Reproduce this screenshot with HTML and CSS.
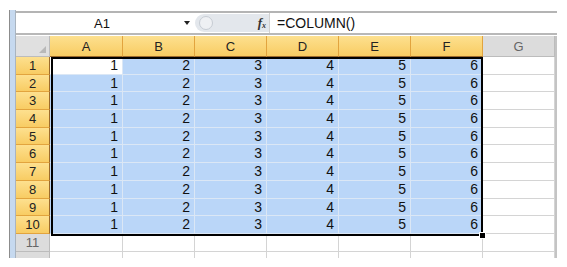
FILE: index.html
```html
<!DOCTYPE html>
<html>
<head>
<meta charset="utf-8">
<link rel="stylesheet" href="styles.css">
</head>
<body>
<div class="window">
  <div class="band"></div>
  <div class="main">
    <div class="fbar">
      <div class="namebox"><span class="name">A1</span><span class="drop"></span></div>
      <div class="pill"><span class="circle"></span><span class="fx">f<sub>x</sub></span></div>
      <div class="formula">=COLUMN()</div>
    </div>
    <div class="sheet">
      <div class="grid" id="grid"></div>
      <div class="selection"><span class="handle"></span></div>
    </div>
  </div>
</div>
<script src="app.js"></script>
</body>
</html>
```
FILE: app.js
```js
var g = document.getElementById('grid');
var cols = ['A','B','C','D','E','F','G'];
function el(cls, txt){ var d=document.createElement('div'); d.className=cls; if(txt!==undefined) d.textContent=txt; g.appendChild(d); }
el('hd corner');
cols.forEach(function(c,i){ el('hd col' + (i<6?' sel':''), c); });
el('edge');
for (var r=1; r<=12; r++){
  el('hd row' + (r<=10?' sel':''), r<=11 ? String(r) : '');
  for (var c=0; c<7; c++){
    var inSel = r<=10 && c<6;
    var cls = 'cell' + (inSel ? (r===1&&c===0 ? ' active' : ' in') : '');
    el(cls, inSel ? String(c+1) : '');
  }
  el('edge');
}
```
FILE: styles.css
```css
html, body { margin: 0; padding: 0; background: #fff; }
body { font-family: "Liberation Sans", Arial, sans-serif; color: #111; }
.window { display: flex; margin: 10px 0 0 9px; width: 548px; height: 248px; overflow: hidden; }
.band { width: 5px; flex: none; background: #c6d9ef; border-left: 1px solid #8c8c8c; border-right: 1px solid #a9b4c0; }
.main { flex: 1; display: flex; flex-direction: column; overflow: hidden; }
.fbar { display: flex; height: 20px; border-top: 2px solid #b4b4b4; border-bottom: 2px solid #b8b8b8; margin-top: 1px; background: #fff; align-items: stretch; }
.namebox { width: 179px; display: flex; align-items: center; position: relative; }
.name { flex: 1; text-align: center; font-size: 13px; padding-left: 4px; }
.drop { width: 0; height: 0; border-left: 3.5px solid transparent; border-right: 3.5px solid transparent; border-top: 4px solid #222; margin-right: 5px; }
.pill { width: 74px; background: #e3e7ec; border-radius: 10px 0 0 10px; display: flex; align-items: center; justify-content: space-between; padding: 0 3px 0 4px; box-sizing: border-box; margin: 1px 0; }
.circle { width: 12px; height: 12px; border-radius: 50%; border: 1px solid #c6ccd3; background: #eef0f3; }
.fx { font-family: "Liberation Serif", serif; font-style: italic; font-weight: bold; font-size: 13px; color: #333; }
.fx sub { font-size: 8px; vertical-align: -1px; }
.formula { flex: 1; font-size: 14px; line-height: 20px; padding-left: 7px; border-left: 1px solid #d0d0d0; }
.sheet { position: relative; margin-top: 1px; }
.grid { display: grid; grid-template-columns: 34px 73px repeat(6, 72px) 2px; grid-template-rows: 21px repeat(12, 17.7px); }
.hd { box-sizing: border-box; text-align: center; font-size: 13px; background: #dcdcdc; border-right: 1px solid #bcbcbc; border-bottom: 1px solid #bcbcbc; color: #666; }
.corner { background: #e0e0e0; position: relative; }
.corner::after { content: ""; position: absolute; right: 3px; bottom: 3px; border-left: 7px solid transparent; border-bottom: 7px solid #b8b8b8; }
.col { line-height: 21px; }
.row { line-height: 17px; font-size: 13px; }
.hd.sel { background: linear-gradient(#fde08f, #f8cc63); border-color: #e2a43e; color: #222; }
.col.sel { border-bottom: 1px solid #9c6a2a; }
.row.sel { border-right: 1px solid #9c6a2a; }
.edge { background: #c4c4c4; }
.cell { box-sizing: border-box; border-right: 1px solid #d4d4d4; border-bottom: 1px solid #d4d4d4; font-size: 14px; text-align: right; padding-right: 4px; line-height: 17px; }
.cell.in { background: #bad6f8; border-color: #dbe7f5; }
.cell.active { background: #fff; border-color: #dbe7f5; }
.selection { position: absolute; left: 35px; top: 21px; width: 432px; height: 179px; box-sizing: border-box; border: 2px solid #000; pointer-events: none; }
.handle { position: absolute; right: -5px; bottom: -5px; width: 5px; height: 5px; background: #000; border: 1px solid #fff; }
```
